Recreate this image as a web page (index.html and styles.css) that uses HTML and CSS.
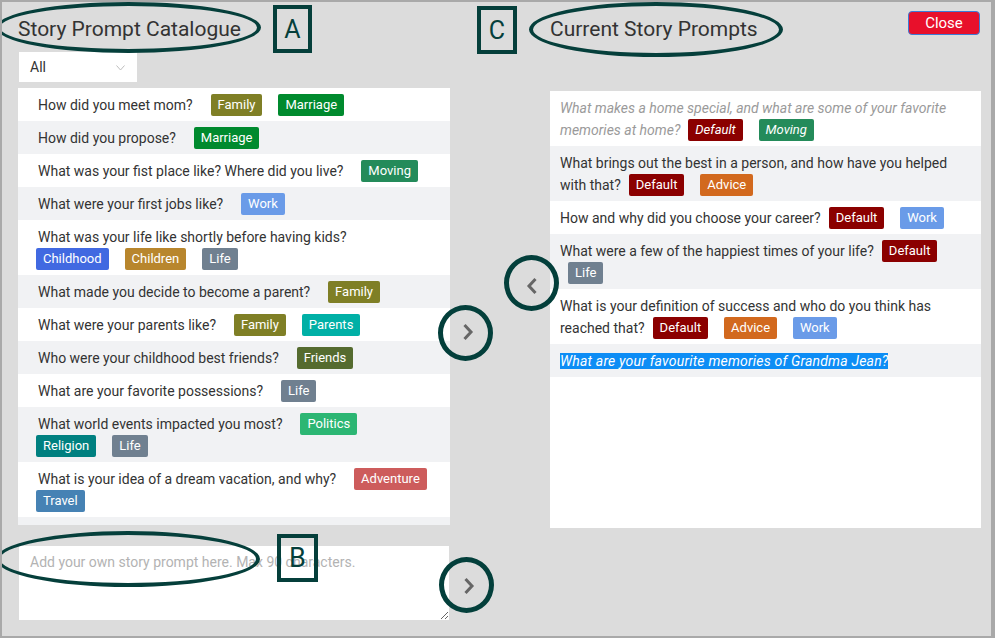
FILE: index.html
```html
<!DOCTYPE html>
<html lang="en">
<head>
<meta charset="utf-8">
<title>Story Prompts</title>
<link rel="stylesheet" href="styles.css">
</head>
<body>
<div class="app">
  <section class="col-left">
    <div class="head"><h2 class="title">Story Prompt Catalogue</h2></div>
    <div class="select"><span>All</span>
      <svg class="caret" width="9" height="6" viewBox="0 0 9 6"><path d="M0.5 0.5 L4.5 5 L8.5 0.5" fill="none" stroke="#bdbdbd" stroke-width="1"/></svg>
    </div>
    <div class="list">
      <div class="row"><span class="q">How did you meet mom?</span> <span class="tag family">Family</span> <span class="tag marriage">Marriage</span></div>
      <div class="row alt"><span class="q">How did you propose?</span> <span class="tag marriage">Marriage</span></div>
      <div class="row"><span class="q">What was your fist place like? Where did you live?</span> <span class="tag moving">Moving</span></div>
      <div class="row alt"><span class="q">What were your first jobs like?</span> <span class="tag work">Work</span></div>
      <div class="row"><span class="q">What was your life like shortly before having kids?</span> <span class="tag childhood">Childhood</span> <span class="tag children">Children</span> <span class="tag life">Life</span></div>
      <div class="row alt"><span class="q">What made you decide to become a parent?</span> <span class="tag family">Family</span></div>
      <div class="row"><span class="q">What were your parents like?</span> <span class="tag family">Family</span> <span class="tag parents">Parents</span></div>
      <div class="row alt"><span class="q">Who were your childhood best friends?</span> <span class="tag friends">Friends</span></div>
      <div class="row"><span class="q">What are your favorite possessions?</span> <span class="tag life">Life</span></div>
      <div class="row alt"><span class="q">What world events impacted you most?</span> <span class="tag politics">Politics</span> <span class="tag religion">Religion</span> <span class="tag life">Life</span></div>
      <div class="row"><span class="q">What is your idea of a dream vacation, and why?</span> <span class="tag adventure">Adventure</span> <span class="tag travel">Travel</span></div>
    </div>
    <textarea class="own" placeholder="Add your own story prompt here. Max 90 characters."></textarea>
  </section>

  <div class="col-mid">
    <button class="circ circ-back" aria-label="Remove">
      <svg width="12" height="18" viewBox="0 0 12 18"><path d="M9.5 2 L3 9 L9.5 16" fill="none" stroke="#666" stroke-width="3"/></svg>
    </button>
    <button class="circ circ-add" aria-label="Add">
      <svg width="12" height="18" viewBox="0 0 12 18"><path d="M2.5 2 L9 9 L2.5 16" fill="none" stroke="#666" stroke-width="3"/></svg>
    </button>
    <button class="circ circ-own" aria-label="Add own">
      <svg width="12" height="18" viewBox="0 0 12 18"><path d="M2.5 2 L9 9 L2.5 16" fill="none" stroke="#666" stroke-width="3"/></svg>
    </button>
  </div>

  <section class="col-right">
    <div class="head head-right">
      <h2 class="title">Current Story Prompts</h2>
      <button class="close">Close</button>
    </div>
    <div class="panel">
      <div class="prow muted">What makes a home special, and what are some of your favorite memories at home?<span class="tag default">Default</span> <span class="tag moving">Moving</span></div>
      <div class="prow alt">What brings out the best in a person, and how have you helped with that?<span class="tag default">Default</span> <span class="tag advice">Advice</span></div>
      <div class="prow">How and why did you choose your career?<span class="tag default">Default</span> <span class="tag work">Work</span></div>
      <div class="prow alt">What were a few of the happiest times of your life?<span class="tag default">Default</span> <span class="tag life">Life</span></div>
      <div class="prow">What is your definition of success and who do you think has reached that?<span class="tag default">Default</span> <span class="tag advice">Advice</span> <span class="tag work">Work</span></div>
      <div class="prow alt"><span class="sel">What are your favourite memories of Grandma Jean?</span></div>
    </div>
  </section>

  <div class="ell ell-a"></div>
  <div class="box box-a">A</div>
  <div class="box box-c">C</div>
  <div class="ell ell-c"></div>
  <div class="ell ell-b"></div>
  <div class="box box-b">B</div>
</div>
</body>
</html>
```

FILE: styles.css
```css
* { box-sizing: border-box; }
html, body { margin: 0; padding: 0; }
body {
  font-family: Roboto, "Liberation Sans", sans-serif;
  color: #333;
  background: #dcdcdc;
}
.app {
  position: relative;
  width: 995px;
  height: 638px;
  border: 2px solid #a9a9a9;
  border-right-width: 4px;
  background: #dcdcdc;
  display: grid;
  grid-template-columns: 432px 100px 431px;
  padding-left: 16px;
  overflow: hidden;
}
.col-left, .col-right { display: flex; flex-direction: column; }
.head { height: 50px; }
.title {
  margin: 17px 0 0;
  font-size: 21px;
  line-height: 21px;
  font-weight: 400;
  color: #333;
}
.select {
  width: 118px;
  height: 30px;
  margin-left: 1px;
  background: #fff;
  display: flex;
  align-items: center;
  justify-content: space-between;
  padding: 0 12px 0 11px;
  font-size: 14px;
  color: #333;
}
.caret { margin-top: 1px; }
.list {
  margin-top: 6px;
  height: 437px;
  overflow: hidden;
  background: #f1f2f4;
}
.row {
  padding: 5.5px 5px 5.5px 20px;
  line-height: 22px;
  font-size: 14px;
  background: #fff;
}
.alt { background: #f1f2f4; }
.row .q { margin-right: 16.4px; }
.tag {
  display: inline-block;
  vertical-align: top;
  height: 22px;
  line-height: 22px;
  padding: 0 7px;
  border-radius: 2px;
  font-size: 13px;
  color: #fff;
}
.row .tag { margin: 0 14.5px 0 -2px; }
.own {
  margin-top: 21px;
  margin-left: 1px;
  width: 430px;
  height: 74px;
  border: none;
  outline: none;
  background: #fff;
  padding: 8px 11px;
  font-family: Roboto, "Liberation Sans", sans-serif;
  font-size: 14px;
  color: #333;
}
.own::placeholder { color: #b3b3b3; }

.col-mid { display: flex; flex-direction: column; align-items: flex-start; }
.circ {
  position: relative;
  z-index: 2;
  width: 55px;
  height: 56px;
  border: 5px solid #033f3b;
  border-radius: 50%;
  background: transparent;
  display: flex;
  align-items: center;
  justify-content: center;
  padding: 0;
}
.circ-back { margin-top: 253px; margin-left: 54px; padding-top: 6px; }
.circ-add { margin-top: -6px; margin-left: -12px; padding-left: 5px; padding-bottom: 3px; }
.circ-own { margin-top: 196px; margin-left: -11px; padding-left: 4px; padding-top: 2px; }

.head-right {
  height: 89px;
  display: flex;
  justify-content: space-between;
  align-items: flex-start;
}
.close {
  margin-top: 9px;
  margin-right: 1px;
  width: 72px;
  height: 24px;
  background: #e8102b;
  border: 1px solid #3d7bd6;
  border-radius: 4px;
  color: #fff;
  font-family: Roboto, "Liberation Sans", sans-serif;
  font-size: 15px;
  line-height: 20px;
  padding: 0;
}
.panel {
  height: 437px;
  background: #fff;
  overflow: hidden;
}
.prow {
  padding: 5.5px 10px;
  line-height: 22px;
  font-size: 14px;
  background: #fff;
}
.prow.alt { background: #f1f2f4; }
.prow .tag { margin: 0 4.4px 0 8px; }
.muted { color: #9a9a9a; font-style: italic; }
.sel {
  background: #0d8df5;
  color: #fff;
  font-style: italic;
  letter-spacing: 0.2px;
}

.family { background: #7f7f26; }
.marriage { background: #008a2e; }
.moving { background: #248b5a; }
.work { background: #6a9be8; }
.childhood { background: #4169e1; }
.children { background: #b8862d; }
.life { background: #708090; }
.parents { background: #00b0a6; }
.friends { background: #556b2f; }
.politics { background: #2cb673; }
.religion { background: #008080; }
.adventure { background: #cd5c5c; }
.travel { background: #4682b4; }
.default { background: #8b0000; }
.advice { background: #d2691e; }

.ell {
  position: absolute;
  border: 4px solid #053f3b;
  border-radius: 50%;
  pointer-events: none;
}
.ell-a { left: -6px; top: 0; width: 265px; height: 51px; }
.ell-c { left: 527px; top: 0; width: 254px; height: 55px; }
.ell-b { left: -6px; top: 529px; width: 264px; height: 56px; }
.box {
  position: absolute;
  border: 4px solid #053f3b;
  display: flex;
  align-items: center;
  justify-content: center;
  color: #053f3b;
  font-size: 25px;
  line-height: 1;
  pointer-events: none;
}
.box-a { left: 271px; top: 3px; width: 39px; height: 48px; }
.box-c { left: 475px; top: 4px; width: 40px; height: 48px; }
.box-b { left: 275px; top: 532px; width: 41px; height: 48px; font-size: 27px; }
```
